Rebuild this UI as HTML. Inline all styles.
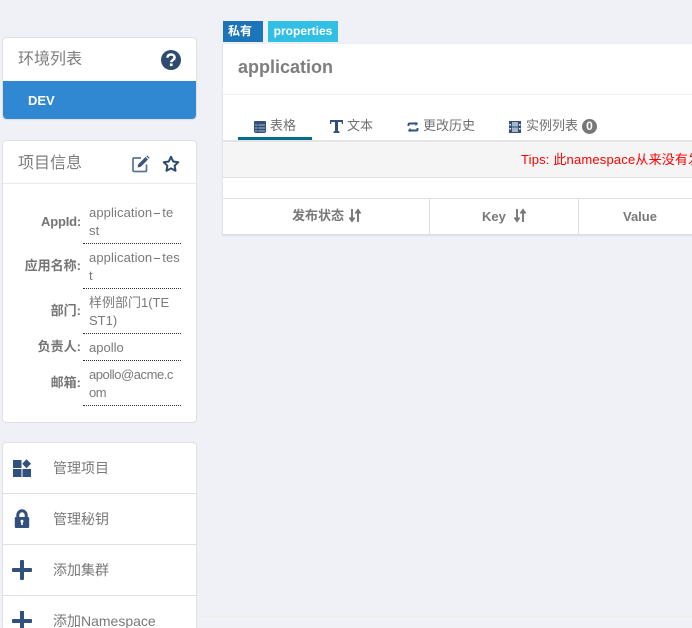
<!DOCTYPE html>
<html><head><meta charset="utf-8">
<style>
html,body{margin:0;padding:0;width:692px;height:628px;overflow:hidden;background:#eff1f7;font-family:"Liberation Sans","Noto Sans CJK SC",sans-serif;color:#797979}
#w{position:absolute;left:0;top:0;width:692px;height:628px;overflow:hidden;background:#eff1f7}
.a{position:absolute;white-space:nowrap}
.p{position:absolute;background:#fff;left:3px;width:192px;border:1px solid #dfe0e4;border-radius:4px;box-sizing:content-box}
svg{position:absolute;overflow:visible}
.lb{font-weight:bold;font-size:13px;color:#757575;text-align:right;width:78px;left:3px}
.v{left:89px;width:92px;font-size:13px;line-height:18px;white-space:normal;color:#7a7a7a}
.v i{font-style:normal;display:inline-block;width:10px;text-align:center;transform:scaleX(2)}
.d{left:83px;width:98px;border-top:1px dotted #333;height:0}
</style></head><body><div id="w">

<div class="a" style="left:0;top:616px;width:692px;height:1px;background:#edeee9"></div>

<div class="p" style="top:37px;height:81px;overflow:hidden;left:2px;width:193px"></div>
<div class="a" style="left:18px;top:49px;font-size:16px;line-height:22px;color:#7d7d7d">环境列表</div>
<svg style="left:161px;top:50px" width="20" height="20" viewBox="0 0 20 20"><circle cx="10" cy="10" r="10" fill="#2d4a6f"/><path d="M6.400 7.700C6.500 5.500 8 4.500 10 4.500c2.200 0 3.600 1.200 3.600 2.900 0 2.700-3.300 2.500-3.300 4.800" fill="none" stroke="#fff" stroke-width="2.500"/><rect x="8.900" y="13.500" width="2.700" height="2.600" fill="#fff"/></svg>
<div class="a" style="left:3px;top:81px;width:193px;height:38px;background:#3087d2;border-radius:0 0 4px 4px;box-shadow:0 1px 1px #dfe0e4"></div>
<div class="a" style="left:28px;top:92px;font-size:13px;line-height:18px;color:#fff;font-weight:bold">DEV</div>

<div class="p" style="top:140px;height:281px;left:2px;width:193px"></div>
<div class="a" style="left:3px;top:183px;width:193px;height:1px;background:#e8e9ec"></div>
<div class="a" style="left:18px;top:153px;font-size:16px;line-height:22px;color:#7d7d7d">项目信息</div>
<svg style="left:132px;top:155px" width="18" height="18" viewBox="0 0 18 18"><path d="M14.500 9.500V15.500a1 1 0 0 1-1 1H2a1 1 0 0 1-1-1V4a1 1 0 0 1 1-1H9" fill="none" stroke="#5b7391" stroke-width="1.700"/><path d="M5.500 12.500l.8-3.300L13.500 2l2.500 2.500-7.200 7.200z" fill="#3a5679"/><path d="M14.300 1.200l.8-.8 2.500 2.500-.8.8z" fill="#3a5679"/></svg>
<svg style="left:162px;top:155px" width="18" height="18" viewBox="0 0 18 18"><path d="M9 1.800l2.200 4.700 5.100.7-3.700 3.500.9 5.100L9 13.400l-4.500 2.400.9-5.100L1.700 7.200l5.100-.7z" fill="none" stroke="#2d4a6f" stroke-width="2" stroke-linejoin="round"/></svg>

<div class="a lb" style="top:214px;letter-spacing:-.2px">AppId:</div>
<div class="a v" style="top:204px;letter-spacing:.1px">application<i>-</i>te<br>st</div>
<div class="a d" style="top:243px"></div>
<div class="a lb" style="top:255px">应用名称:</div>
<div class="a v" style="top:249px;letter-spacing:.1px">application<i>-</i>tes<br>t</div>
<div class="a d" style="top:288px"></div>
<div class="a lb" style="top:300px">部门:</div>
<div class="a v" style="top:294px">样例部门1(TE<br>ST1)</div>
<div class="a d" style="top:333px"></div>
<div class="a lb" style="top:336px">负责人:</div>
<div class="a v" style="top:339px">apollo</div>
<div class="a d" style="top:360px"></div>
<div class="a lb" style="top:372px">邮箱:</div>
<div class="a v" style="top:366px;letter-spacing:-.45px">apollo@acme.c<br>om</div>
<div class="a d" style="top:405px"></div>

<div class="p" style="top:442px;height:185px;left:2px;width:193px;border-bottom:none;border-radius:4px 4px 0 0"></div>
<div class="a" style="left:3px;top:493px;width:193px;height:1px;background:#dfe0e4"></div>
<div class="a" style="left:3px;top:544px;width:193px;height:1px;background:#dfe0e4"></div>
<div class="a" style="left:3px;top:595px;width:193px;height:1px;background:#dfe0e4"></div>
<div class="a" style="left:53px;top:459px;font-size:14px;line-height:18px">管理项目</div>
<div class="a" style="left:53px;top:510px;font-size:14px;line-height:18px">管理秘钥</div>
<div class="a" style="left:53px;top:561px;font-size:14px;line-height:18px">添加集群</div>
<div class="a" style="left:53px;top:612px;height:16px;overflow:hidden;font-size:14px;line-height:18px">添加Namespace</div>
<svg style="left:13px;top:460px" width="18" height="18" viewBox="0 0 18 18"><rect width="8.500" height="8" x="0" y="0" fill="#31507d"/><rect width="8.500" height="8" x="0" y="9" fill="#31507d"/><rect width="8.500" height="8" x="9.500" y="9" fill="#31507d"/><path d="M13.500 -.7L18 3.800 13.500 8.300 9.200 3.800z" fill="#31507d"/></svg>
<svg style="left:14px;top:509px" width="16" height="20" viewBox="0 0 16 20"><path d="M3.800 9V6a4.200 4.200 0 0 1 8.400 0V9" fill="none" stroke="#31507d" stroke-width="3"/><rect x=".8" y="8" width="14.400" height="11" rx="1" fill="#31507d"/><circle cx="8" cy="12.200" r="1.500" fill="#fff"/><rect x="7.200" y="12.500" width="1.600" height="3.500" fill="#fff"/></svg>
<svg style="left:12px;top:560px" width="20" height="20" viewBox="0 0 20 20"><rect x="0" y="8" width="20" height="4" rx="1" fill="#31507d"/><rect x="8" y="0" width="4" height="20" rx="1" fill="#31507d"/></svg>
<svg style="left:12px;top:611px;overflow:hidden" width="20" height="17" viewBox="0 0 20 17"><rect x="0" y="8" width="20" height="4" rx="1" fill="#31507d"/><rect x="8" y="0" width="4" height="17" fill="#31507d"/></svg>

<div class="a" style="left:223px;top:21px;width:40px;height:21px;background:#1c75b9;color:#fff;font-size:12px;line-height:20px;font-weight:bold;text-indent:5px">私有</div>
<div class="a" style="left:268px;top:21px;width:70px;height:21px;background:#31c0e3;color:#fff;font-size:12px;line-height:20px;font-weight:bold;text-align:center">properties</div>

<div class="a" style="left:223px;top:44px;width:469px;height:190px;background:#fff;box-shadow:-1px 0 0 #e4e5e9,0 1px 1px 1px #dddee2"></div>
<div class="a" style="left:238px;top:55px;font-size:18px;line-height:24px;font-weight:bold;color:#7e7e7e">application</div>
<div class="a" style="left:223px;top:94px;width:469px;height:1px;background:#eeeff2"></div>

<div class="a" style="left:223px;top:140px;width:469px;height:2px;background:#e2e3e5"></div>
<div class="a" style="left:238px;top:137px;width:74px;height:3px;background:#036d8b"></div>

<svg style="left:254px;top:121px" width="12" height="12" viewBox="0 0 12 12"><rect x=".5" y=".5" width="11" height="11" rx="1.500" fill="#6d83a0" stroke="#31507d"/><rect x="0" y="0" width="12" height="3" rx="1" fill="#31507d"/><path d="M0 5.500H12M0 8.500H12M4 3V12" stroke="#31507d"/></svg>
<div class="a" style="left:270px;top:117px;font-size:13px;line-height:18px;color:#6f6f6f">表格</div>
<svg style="left:330px;top:120px" width="13" height="13" viewBox="0 0 13 13"><path d="M0 0H13V4H12L11.500 2H8V11L9.500 11.500V13H3.500V11.500L5 11V2H1.500L1 4H0z" fill="#31507d"/></svg>
<div class="a" style="left:347px;top:117px;font-size:13px;line-height:18px;color:#6f6f6f">文本</div>
<svg style="left:408px;top:122px" width="10" height="10" viewBox="0 0 10 10"><path d="M.5 4V2.500a1 1 0 0 1 1-1H9.500M9.500 6V7.500a1 1 0 0 1-1 1H.5" stroke="#31507d" stroke-width="1.900" fill="none"/><path d="M7.500 0L10 1.500 7.500 4.200zM2.500 5.800L0 8.500 2.500 10z" fill="#31507d"/></svg>
<div class="a" style="left:423px;top:117px;font-size:13px;line-height:18px;color:#6f6f6f">更改历史</div>
<svg style="left:509px;top:121px" width="12" height="12" viewBox="0 0 12 12"><rect width="12" height="12" fill="#31507d"/><rect x="3" y="1" width="6" height="4.500" fill="#a8b6c8"/><rect x="3" y="6.500" width="6" height="4.500" fill="#a8b6c8"/><rect x="0.500" y="3" width="1.500" height="1.500" fill="#fff"/><rect x="0.500" y="7" width="1.500" height="1.500" fill="#fff"/><rect x="10" y="3" width="1.500" height="1.500" fill="#fff"/><rect x="10" y="7" width="1.500" height="1.500" fill="#fff"/></svg>
<div class="a" style="left:526px;top:117px;font-size:13px;line-height:18px;color:#6f6f6f">实例列表</div>
<div class="a" style="left:582px;top:119px;width:15px;height:15px;border-radius:8px;background:#777;color:#fff;font-size:12px;line-height:15px;font-weight:bold;text-align:center">0</div>

<div class="a" style="left:223px;top:142px;width:469px;height:35px;background:#f5f5f5"></div>
<div class="a" style="left:223px;top:177px;width:469px;height:1px;background:#e3e3e3"></div>
<div class="a" style="left:521px;top:151px;width:171px;overflow:hidden;font-size:13px;line-height:18px;color:#ff0000;letter-spacing:.18px">Tips: 此namespace从来没有发</div>

<div class="a" style="left:223px;top:198px;width:469px;height:1px;background:#e0e0e0"></div>
<div class="a" style="left:429px;top:199px;width:1px;height:35px;background:#e0e0e0"></div>
<div class="a" style="left:578px;top:199px;width:1px;height:35px;background:#e0e0e0"></div>
<div class="a" style="left:292px;top:207px;font-size:13px;line-height:18px;font-weight:bold">发布状态</div>
<svg style="left:349px;top:209px" width="12" height="13" viewBox="0 0 12 13"><path d="M3 0V11M0.500 8.500L3 12 5.500 8.500M9 13V2M6.500 4.500L9 1 11.500 4.500" fill="none" stroke="#777" stroke-width="1.900"/></svg>
<div class="a" style="left:482px;top:208px;font-size:13px;line-height:18px;font-weight:bold">Key</div>
<svg style="left:514px;top:209px" width="12" height="13" viewBox="0 0 12 13"><path d="M3 0V11M0.500 8.500L3 12 5.500 8.500M9 13V2M6.500 4.500L9 1 11.500 4.500" fill="none" stroke="#777" stroke-width="1.900"/></svg>
<div class="a" style="left:623px;top:208px;font-size:13px;line-height:18px;font-weight:bold">Value</div>
</div></body></html>
